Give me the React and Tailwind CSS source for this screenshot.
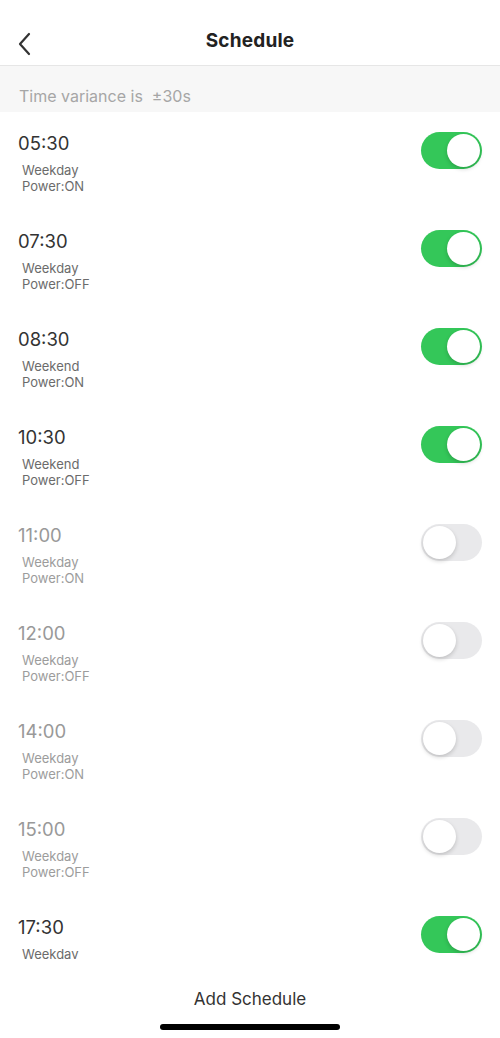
import { useState } from "react";

const initial = [
  { time: "05:30", days: "Weekday", power: "ON", on: true },
  { time: "07:30", days: "Weekday", power: "OFF", on: true },
  { time: "08:30", days: "Weekend", power: "ON", on: true },
  { time: "10:30", days: "Weekend", power: "OFF", on: true },
  { time: "11:00", days: "Weekday", power: "ON", on: false },
  { time: "12:00", days: "Weekday", power: "OFF", on: false },
  { time: "14:00", days: "Weekday", power: "ON", on: false },
  { time: "15:00", days: "Weekday", power: "OFF", on: false },
  { time: "17:30", days: "Weekday", power: "ON", on: true },
];

const Toggle = ({ on, onClick }) => (
  <button
    onClick={onClick}
    className={`relative w-[61px] h-[37px] rounded-full shrink-0 transition-colors ${
      on ? "bg-[#34c759]" : "bg-[#e9e9eb]"
    }`}
  >
    <span
      className={`absolute top-[2px] w-[33px] h-[33px] rounded-full bg-white shadow-[0_2px_4px_rgba(0,0,0,0.18)] transition-all ${
        on ? "left-[26px]" : "left-[2px]"
      }`}
    />
  </button>
);

export default function App() {
  const [items, setItems] = useState(initial);

  const flip = (idx) =>
    setItems((list) => list.map((it, i) => (i === idx ? { ...it, on: !it.on } : it)));

  return (
    <div
      className="w-[500px] h-[1038px] bg-white flex flex-col overflow-hidden"
      style={{ fontFamily: "Inter, 'Noto Sans', sans-serif" }}
    >
      {/* Header */}
      <div className="h-[66px] shrink-0 flex items-center justify-center relative border-b border-[#e6e6e6]">
        <button className="absolute left-[14px] top-[28px] p-1">
          <svg width="14" height="24" viewBox="0 0 14 24" fill="none">
            <path d="M11 2 L2 12 L11 22" stroke="#333" strokeWidth="2.2" strokeLinecap="round" strokeLinejoin="round" />
          </svg>
        </button>
        <h1 className="text-[19px] font-bold text-[#222] tracking-[0.2px] mt-[17px]">Schedule</h1>
      </div>

      {/* Variance note */}
      <div className="h-[46px] shrink-0 bg-[#f7f7f7] flex items-center px-[19px] pt-[13px]">
        <span className="text-[16px] text-[#a6a6a6]">Time variance is&nbsp; ±30s</span>
      </div>

      {/* List */}
      <div className="flex-1 overflow-hidden">
        {items.map((it, idx) => (
          <div key={it.time} className="h-[98px] flex items-start justify-between px-[18px] pt-[19px]">
            <div className="flex flex-col">
              <span className={`text-[18.5px] leading-[24px] ${it.on ? "text-[#333]" : "text-[#999]"}`}>
                {it.time}
              </span>
              <span className={`pl-[4px] mt-[7px] text-[13px] leading-[16px] ${it.on ? "text-[#6b6b6b]" : "text-[#9c9c9c]"}`}>
                {it.days}
              </span>
              <span className={`pl-[4px] text-[13px] leading-[16px] ${it.on ? "text-[#6b6b6b]" : "text-[#9c9c9c]"}`}>
                Power:{it.power}
              </span>
            </div>
            <div className="pt-[1px]">
              <Toggle on={it.on} onClick={() => flip(idx)} />
            </div>
          </div>
        ))}
      </div>

      {/* Footer */}
      <div className="h-[79px] shrink-0 bg-white flex flex-col items-center">
        <button className="mt-[28px] text-[17px] text-[#333]">Add Schedule</button>
        <div className="mt-[11px] w-[180px] h-[6px] rounded-full bg-black" />
      </div>
    </div>
  );
}
